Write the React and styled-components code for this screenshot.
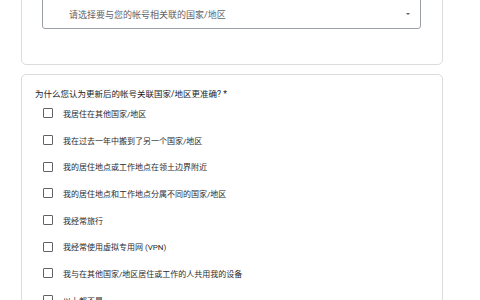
import React from "react";
import styled, { createGlobalStyle } from "styled-components";

const GlobalStyle = createGlobalStyle`
  html, body {
    margin: 0;
    padding: 0;
    background: #ffffff;
    overflow: hidden;
  }
  body {
    font-family: Roboto, "Noto Sans CJK SC", "Noto Sans", sans-serif;
    color: #202124;
  }
`;

const Page = styled.div`
  width: 422px;
  margin-left: 21px;
  display: flex;
  flex-direction: column;
  gap: 9px;
`;

const Card = styled.div`
  border: 1px solid #dadce0;
  border-radius: 5px;
  background: #fff;
  box-sizing: border-box;
  padding: ${(props) => props.$pad};
  margin-top: ${(props) => props.$top || "0"};
`;

const Select = styled.div`
  height: 37px;
  box-sizing: border-box;
  border: 1px solid #9aa0a6;
  border-radius: 3px;
  padding: 8px 10px 0 26px;
  display: flex;
  align-items: center;
  justify-content: space-between;
  font-size: 9px;
  color: #5f6368;
`;

const Arrow = styled.span`
  width: 0;
  height: 0;
  border-left: 2.5px solid transparent;
  border-right: 2.5px solid transparent;
  border-top: 2.5px solid #5f6368;
  margin-top: -1px;
`;

const Question = styled.div`
  font-size: 8.5px;
  line-height: 12px;
  color: #202124;
`;

const Options = styled.div`
  display: flex;
  flex-direction: column;
  padding-left: 8px;
`;

const Option = styled.label`
  height: 26.7px;
  display: flex;
  align-items: center;
  gap: 10px;
  font-size: 8px;
  color: #2a2b2e;
`;

const Box = styled.span`
  width: 10px;
  height: 10px;
  box-sizing: border-box;
  border: 1.5px solid #5f6368;
  border-radius: 1px;
  flex-shrink: 0;
`;

const reasons = [
  "我居住在其他国家/地区",
  "我在过去一年中搬到了另一个国家/地区",
  "我的居住地点或工作地点在领土边界附近",
  "我的居住地点和工作地点分属不同的国家/地区",
  "我经常旅行",
  "我经常使用虚拟专用网 (VPN)",
  "我与在其他国家/地区居住或工作的人共用我的设备",
  "以上都不是",
];

export default function App() {
  return (
    <>
      <GlobalStyle />
      <Page>
        <Card $pad="0 21px 35px 20px" $top="-9px">
          <Select>
            <span>请选择要与您的帐号相关联的国家/地区</span>
            <Arrow />
          </Select>
        </Card>
        <Card $pad="13px 13px 10px 13px">
          <Question>为什么您认为更新后的帐号关联国家/地区更准确? *</Question>
          <Options>
            {reasons.map((r) => (
              <Option key={r}>
                <Box />
                <span>{r}</span>
              </Option>
            ))}
          </Options>
        </Card>
      </Page>
    </>
  );
}
